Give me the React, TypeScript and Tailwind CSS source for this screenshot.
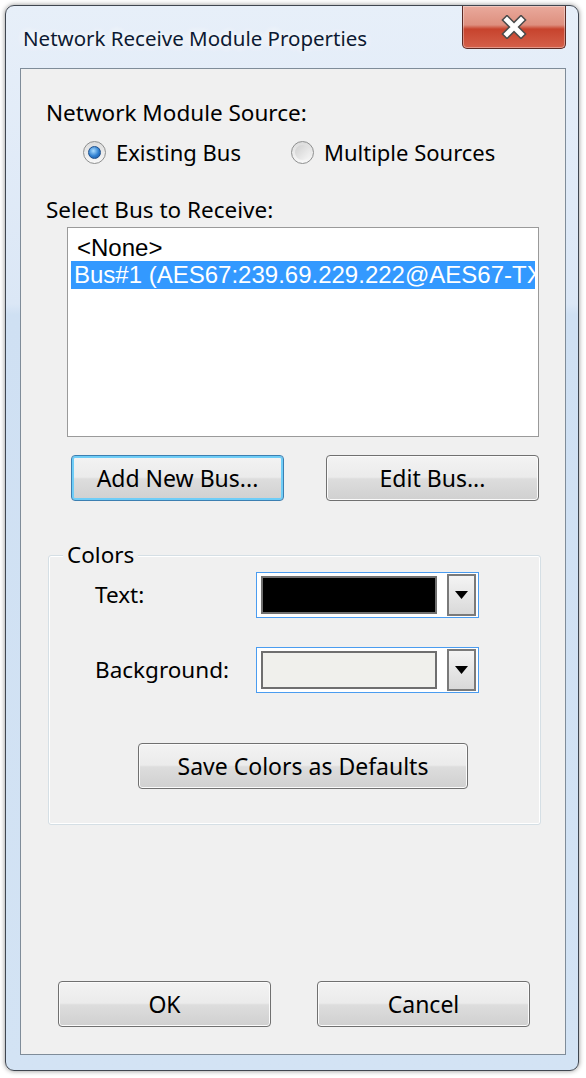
import React from "react";

const UI = { fontFamily: '"Noto Sans", "Open Sans", sans-serif' };
const LIST = { fontFamily: '"Liberation Sans", Arial, sans-serif' };

function Radio({ checked, label }: { checked: boolean; label: string }) {
  return (
    <div className="flex items-center gap-[10px]">
      <div className="w-[23px] h-[23px] rounded-full border border-[#8e8f8f] bg-[linear-gradient(to_bottom,#dcdcdc,#f8f8f8)] flex items-center justify-center">
        <div
          className={
            checked
              ? "w-[13px] h-[13px] rounded-full border border-[#1d4f8c] bg-[radial-gradient(circle_at_40%_35%,#a9dcff,#2f7fd0_55%,#1b4f96)]"
              : "w-[15px] h-[15px] rounded-full bg-[linear-gradient(135deg,#cfcfcf,#f6f6f6)]"
          }
        />
      </div>
      <span className="text-[22px]">{label}</span>
    </div>
  );
}

function Btn({ label, focus, className }: { label: string; focus?: boolean; className?: string }) {
  return (
    <button
      className={
        "h-[46px] w-[213px] rounded-[4px] border text-[23px] text-black bg-[linear-gradient(to_bottom,#f3f3f3_0%,#ebebeb_48%,#dddddd_52%,#d0d0d0_100%)] " +
        (focus
          ? "border-[#3c7fb1] shadow-[inset_0_0_0_2px_#6fcdf7]"
          : "border-[#707070] shadow-[inset_0_0_0_1px_#fbfbfb]") +
        " " +
        (className || "")
      }
    >
      {label}
    </button>
  );
}

function ColorCombo({ color }: { color: string }) {
  return (
    <div className="w-[223px] h-[46px] border border-[#4a9cf0] bg-white flex items-center pl-[4px] pr-[2px]">
      <div className="w-[176px] h-[38px] border-2 border-[#6f6f6f]" style={{ background: color }} />
      <div className="ml-auto w-[29px] h-[42px] border-2 border-[#7a7a7a] bg-[linear-gradient(to_bottom,#f4f4f4,#d9d9d9)] flex items-center justify-center">
        <svg width="13" height="8" viewBox="0 0 13 8">
          <path d="M0 0 H13 L6.5 8 Z" fill="#000" />
        </svg>
      </div>
    </div>
  );
}

export default function App() {
  return (
    <div className="w-[586px] h-[1078px] bg-white pt-[5px] pl-[5px]" style={UI}>
      <div className="w-[574px] h-[1066px] rounded-[9px] border border-[#3f4650] shadow-[0_0_5px_rgba(0,0,0,0.45)] bg-[linear-gradient(to_bottom,#e7eff9_0%,#dbe7f6_28%,#cfe0f3_29%,#d3e3f4_100%)] flex flex-col">
        {/* title bar */}
        <div className="h-[62px] flex items-start relative">
          <div className="pl-[17px] pt-[17px] text-[20.5px] text-[#0d1a33] [text-shadow:0_0_8px_#ffffff,0_0_8px_#ffffff]">
            Network Receive Module Properties
          </div>
          <div className="absolute left-[456px] top-0 w-[104px] h-[43px] rounded-b-[5px] border border-t-0 border-[#5b2a24] bg-[linear-gradient(to_bottom,#e9aa9c_0%,#de8f7f_45%,#c7432d_55%,#d4604a_100%)] shadow-[inset_0_0_0_1px_rgba(255,255,255,0.35)] flex items-center justify-center">
            <svg width="28" height="24" viewBox="0 0 28 24">
              <path d="M7 5 L21 19 M21 5 L7 19" stroke="#4b4b4b" strokeWidth="8" strokeLinecap="square" />
              <path d="M7 5 L21 19 M21 5 L7 19" stroke="#ffffff" strokeWidth="5" strokeLinecap="square" />
            </svg>
          </div>
        </div>
        {/* client area */}
        <div className="ml-[14px] w-[546px] h-[987px] border border-[#7f8c99] bg-[#f0f0f0] flex flex-col text-black">
          <div className="mt-[32px] ml-[25px] h-[24px] flex items-center text-[22.5px]">Network Module Source:</div>
          <div className="mt-[15px] ml-[62px] h-[24px] flex items-center">
            <div className="w-[208px]">
              <Radio checked label="Existing Bus" />
            </div>
            <Radio checked={false} label="Multiple Sources" />
          </div>
          <div className="mt-[34px] ml-[25px] h-[24px] flex items-center text-[22.5px]">Select Bus to Receive:</div>
          <div className="mt-[5px] ml-[46px] w-[472px] h-[210px] border border-[#9a9a9a] bg-white p-[3px] overflow-hidden" style={LIST}>
            <div className="h-[30px] flex items-center pt-[4px] pl-[6px] text-[24px] whitespace-nowrap">&lt;None&gt;</div>
            <div className="h-[28px] flex items-center pl-[3px] text-[24px] whitespace-nowrap overflow-hidden bg-[#3399ff] text-white">
              Bus#1 (AES67:239.69.229.222@AES67-TX
            </div>
          </div>
          <div className="mt-[18px] ml-[50px] flex gap-[42px]">
            <Btn label="Add New Bus..." focus />
            <Btn label="Edit Bus..." />
          </div>
          <div className="mt-[54px] ml-[27px] w-[493px] h-[270px] relative border border-[#d5dfe5] rounded-[3px] shadow-[inset_0_0_0_1px_#ffffff] flex flex-col">
            <div className="absolute left-[14px] top-[-13px] px-[4px] bg-[#f0f0f0] text-[22.5px] leading-[24px]">Colors</div>
            <div className="mt-[16px] flex items-center">
              <div className="w-[207px] pl-[46px] text-[22.5px]">Text:</div>
              <ColorCombo color="#000000" />
            </div>
            <div className="mt-[29px] flex items-center">
              <div className="w-[207px] pl-[46px] text-[22.5px]">Background:</div>
              <ColorCombo color="#f0f0ec" />
            </div>
            <div className="mt-[50px] ml-[89px]">
              <Btn label="Save Colors as Defaults" className="w-[330px] h-[45px]" />
            </div>
          </div>
          <div className="mt-auto mb-[27px] ml-[37px] flex gap-[46px]">
            <Btn label="OK" />
            <Btn label="Cancel" />
          </div>
        </div>
      </div>
    </div>
  );
}
